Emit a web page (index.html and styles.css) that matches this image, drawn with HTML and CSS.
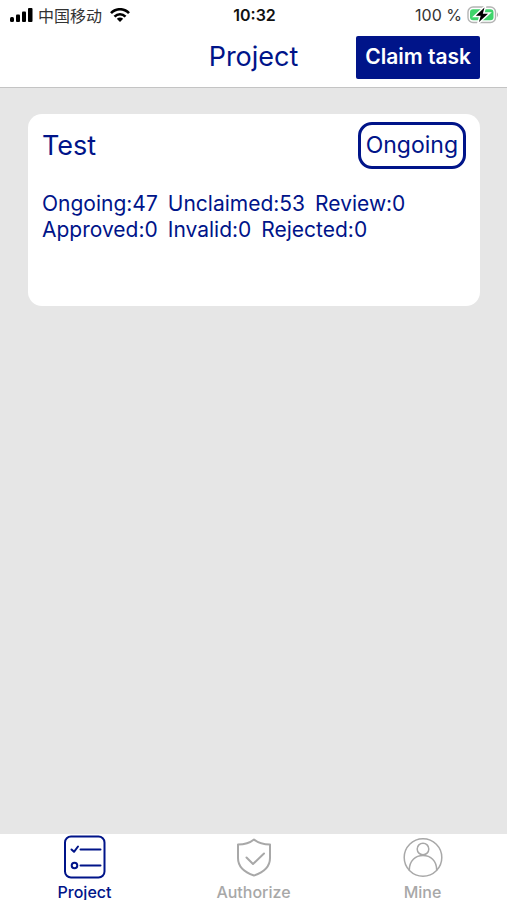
FILE: index.html
```html
<!DOCTYPE html>
<html lang="en">
<head>
<meta charset="utf-8">
<meta name="viewport" content="width=device-width, initial-scale=1">
<title>Project</title>
<link rel="stylesheet" href="styles.css">
</head>
<body>
<header class="top">
  <div class="status">
    <div class="carrier">
      <svg width="23" height="14" viewBox="0 0 23 14" aria-hidden="true"><rect x="0" y="9" width="4" height="5" rx="1.5"/><rect x="6" y="6.5" width="4" height="7.5" rx="1"/><rect x="12" y="3.5" width="4" height="10.5" rx="1"/><rect x="18" y="0" width="4.5" height="14" rx="1"/></svg>
      <span lang="zh-CN">中国移动</span>
      <svg class="wifi" width="20" height="14" viewBox="0 0 20 14" aria-hidden="true"><g fill="none" stroke="#000" stroke-width="2.6"><path d="M1 5.2C6-.1 14-.1 19 5.2"/><path d="M4.5 8.7C7.7 5.5 12.3 5.5 15.5 8.7"/></g><path d="M10 14 6.8 10.8Q10 8.2 13.2 10.8Z"/></svg>
    </div>
    <time class="clock">10:32</time>
    <div class="power">
      <span>100 %</span>
      <svg width="32" height="18" viewBox="0 0 32 18" aria-hidden="true"><rect x="1" y="1" width="27.5" height="15.5" rx="5" fill="#fff" stroke="#b4b4b4" stroke-width="1.4"/><rect x="3" y="3.2" width="23.5" height="11" rx="3" fill="#3fd46b"/><path d="M30 6.3Q32 8.7 30 11.2Z" fill="#b4b4b4"/><path d="M17.5 1.5 8.8 9.8H13.7L12 16 21 7.8H15.8Z" stroke="#fff" stroke-width="3" paint-order="stroke"/></svg>
    </div>
  </div>
  <div class="navbar">
    <h1 class="title">Project</h1>
    <button class="claim" type="button">Claim task</button>
  </div>
</header>
<main class="content">
  <article class="card">
    <div class="card-head">
      <h2 class="name">Test</h2>
      <span class="badge">Ongoing</span>
    </div>
    <div class="stats">
      <div class="row"><span>Ongoing:47</span><span>Unclaimed:53</span><span>Review:0</span></div>
      <div class="row"><span>Approved:0</span><span>Invalid:0</span><span>Rejected:0</span></div>
    </div>
  </article>
</main>
<nav class="tabs">
  <a class="tab active" href="#project" aria-current="page">
    <svg width="44" height="44" viewBox="0 0 44 44" aria-hidden="true"><rect x="2" y="1.5" width="39.5" height="41" rx="6"/><path d="M17.5 14.5H37.5M17.5 30.5H37.5M8.5 14.5 11 16.8 15 11.5"/><circle cx="11.5" cy="30.5" r="2.8"/></svg>
    <span>Project</span>
  </a>
  <a class="tab" href="#authorize">
    <svg width="44" height="44" viewBox="0 0 44 44" aria-hidden="true"><path d="M22 4.5Q28 9.5 38 9.5V23C38 33 31 37.5 22 40.5 13 37.5 6 33 6 23V9.5Q16 9.5 22 4.5ZM14.5 22.5 21 29 32 18.5"/></svg>
    <span>Authorize</span>
  </a>
  <a class="tab" href="#mine">
    <svg class="thin" width="44" height="44" viewBox="0 0 44 44" aria-hidden="true"><circle cx="22" cy="22.5" r="18.8"/><circle cx="22" cy="14" r="5.8"/><path d="M8.3 35.2C8.3 25.5 14.5 20.5 22 20.5S35.7 25.5 35.7 35.2"/></svg>
    <span>Mine</span>
  </a>
</nav>
</body>
</html>
```
FILE: styles.css
```css
* { box-sizing: border-box; }
body {
  margin: 0;
  height: 100vh;
  overflow: hidden;
  display: flex;
  flex-direction: column;
  background: #e6e6e6;
  color: #001489;
  font-family: Inter, "Noto Sans CJK SC", sans-serif;
}
.top {
  padding-bottom: 2px;
  background: #fff;
  border-bottom: 1px solid #c4c4c4;
}
.status {
  display: grid;
  grid-template-columns: 1fr auto 1fr;
  align-items: center;
  height: 29px;
  padding: 0 8px 0 10px;
  color: #333;
  font-size: 16px;
}
.carrier, .power {
  display: flex;
  align-items: center;
  gap: 5px;
}
.wifi { margin-left: 3px; }
.power { justify-content: flex-end; }
.clock { color: #111; font-weight: 600; }
.navbar {
  display: grid;
  grid-template-columns: 1fr auto 1fr;
  align-items: center;
  height: 56px;
  padding: 0 27px;
}
.title, .name { margin: 0; font-weight: 400; font-size: 27px; line-height: 36px; }
.title { grid-column: 2; }
.claim {
  justify-self: end;
  height: 43px;
  padding: 0 9px;
  border: 0;
  border-radius: 2px;
  background: #001489;
  color: #fff;
  font: 600 21px/26px Inter, sans-serif;
  white-space: nowrap;
}
.content { flex: 1; padding: 26px 27px 26px 28px; }
.card {
  min-height: 192px;
  padding: 8px 14px;
  border-radius: 14px;
  background: #fff;
}
.card-head {
  display: flex;
  align-items: center;
  justify-content: space-between;
}
.badge {
  padding: 8px 5px;
  border: 3px solid #001489;
  border-radius: 14px;
  font-size: 23px;
  line-height: 25px;
}
.stats { margin-top: 22px; font-size: 21px; line-height: 26px; }
.row { display: flex; flex-wrap: wrap; column-gap: 10px; }
.tabs {
  display: grid;
  grid-template-columns: repeat(3, 1fr);
  height: 66px;
  background: #fff;
}
.tab {
  display: flex;
  flex-direction: column;
  align-items: center;
  gap: 5px;
  padding-top: 1px;
  color: #a8a8a8;
  font-size: 16px;
  font-weight: 500;
  line-height: 16px;
  text-decoration: none;
}
.tab.active { color: #001489; }
.tab svg {
  flex: none;
  fill: none;
  stroke: currentColor;
  stroke-width: 2;
  stroke-linecap: round;
  stroke-linejoin: round;
}
.tab .thin { stroke-width: 1.5; }
```
